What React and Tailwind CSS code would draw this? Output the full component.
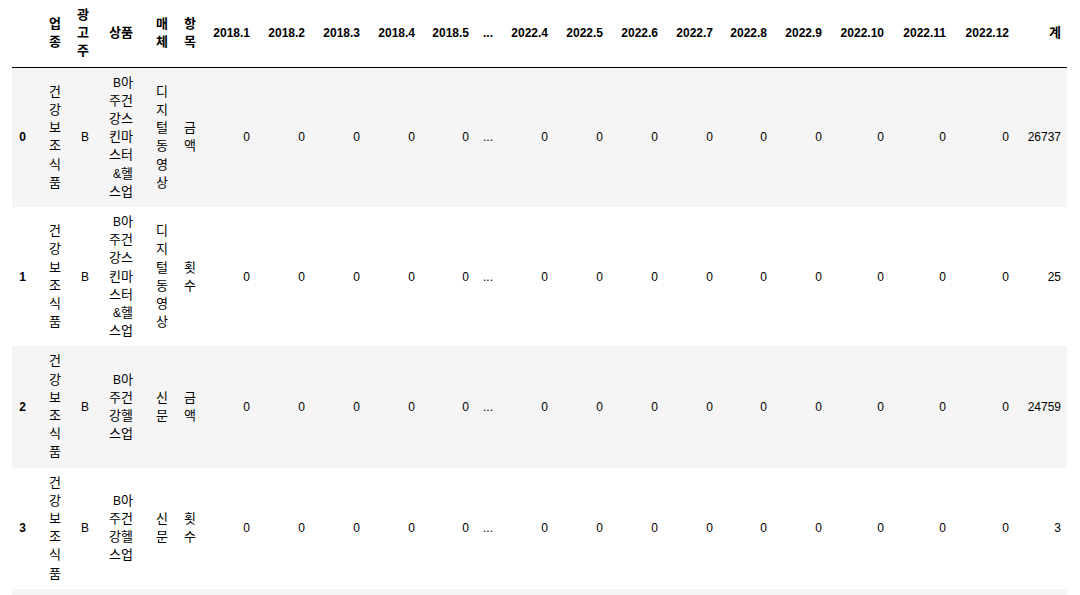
import React from 'react';

const colWidths = [20, 35, 28, 44, 35, 28, 54, 55, 55, 55, 54, 24, 55, 55, 55, 55, 54, 55, 62, 62, 63, 52];

const monthCols = ['2018.1', '2018.2', '2018.3', '2018.4', '2018.5', '...', '2022.4', '2022.5', '2022.6', '2022.7', '2022.8', '2022.9', '2022.10', '2022.11', '2022.12'];

const headers = [
  [],
  ['업', '종'],
  ['광', '고', '주'],
  ['상품'],
  ['매', '체'],
  ['항', '목'],
  ...monthCols.map(m => [m]),
  ['계']
];

const industry = ['건', '강', '보', '조', '식', '품'];

const rows = [
  { idx: 0, product: ['B아', '주건', '강스', '킨마', '스터', '&헬', '스업'], media: ['디', '지', '털', '동', '영', '상'], item: ['금', '액'], total: '26737' },
  { idx: 1, product: ['B아', '주건', '강스', '킨마', '스터', '&헬', '스업'], media: ['디', '지', '털', '동', '영', '상'], item: ['횟', '수'], total: '25' },
  { idx: 2, product: ['B아', '주건', '강헬', '스업'], media: ['신', '문'], item: ['금', '액'], total: '24759' },
  { idx: 3, product: ['B아', '주건', '강헬', '스업'], media: ['신', '문'], item: ['횟', '수'], total: '3' }
];

// hangul glyphs render a bit wider in the notebook font
const Ko = ({ children }) => <span className="text-[13px]">{children}</span>;

const Lines = ({ lines }) => (
  <>
    {lines.map((l, i) => (
      <React.Fragment key={i}>
        {i > 0 && <br />}
        {l.split(/([\uac00-\ud7a3]+)/).map((part, j) =>
          /[\uac00-\ud7a3]/.test(part) ? <Ko key={j}>{part}</Ko> : part
        )}
      </React.Fragment>
    ))}
  </>
);

const App = () => {
  return (
    <div className="h-[595px] w-[1080px] overflow-hidden bg-white pl-3 text-black font-['Liberation_Sans','Noto_Sans_CJK_KR',sans-serif] text-[12px] leading-[18.2px]">
      <table className="w-[1055px] table-fixed border-collapse">
        <colgroup>
          {colWidths.map((w, i) => (
            <col key={i} style={{ width: w }} />
          ))}
        </colgroup>
        <thead className="border-b border-black">
          <tr>
            {headers.map((h, i) => (
              <th key={i} className="whitespace-nowrap px-[6px] py-[6px] text-right align-middle font-bold">
                <Lines lines={h} />
              </th>
            ))}
          </tr>
        </thead>
        <tbody>
          {rows.map(row => (
            <tr key={row.idx} className={row.idx % 2 === 0 ? 'bg-[#f5f5f5]' : 'bg-white'}>
              <th className="whitespace-nowrap px-[6px] py-[6px] text-right align-middle font-bold">{row.idx}</th>
              <td className="whitespace-nowrap px-[6px] py-[6px] text-right align-middle"><Lines lines={industry} /></td>
              <td className="whitespace-nowrap px-[6px] py-[6px] text-right align-middle">B</td>
              <td className="whitespace-nowrap px-[6px] py-[6px] text-right align-middle"><Lines lines={row.product} /></td>
              <td className="whitespace-nowrap px-[6px] py-[6px] text-right align-middle"><Lines lines={row.media} /></td>
              <td className="whitespace-nowrap px-[6px] py-[6px] text-right align-middle"><Lines lines={row.item} /></td>
              {monthCols.map(m => (
                <td key={m} className="whitespace-nowrap px-[6px] py-[6px] text-right align-middle">
                  {m === '...' ? '...' : '0'}
                </td>
              ))}
              <td className="whitespace-nowrap px-[6px] py-[6px] text-right align-middle">{row.total}</td>
            </tr>
          ))}
          <tr className="h-[30px] bg-[#f5f5f5]">
            <td colSpan={colWidths.length}></td>
          </tr>
        </tbody>
      </table>
    </div>
  );
};

export default App;
